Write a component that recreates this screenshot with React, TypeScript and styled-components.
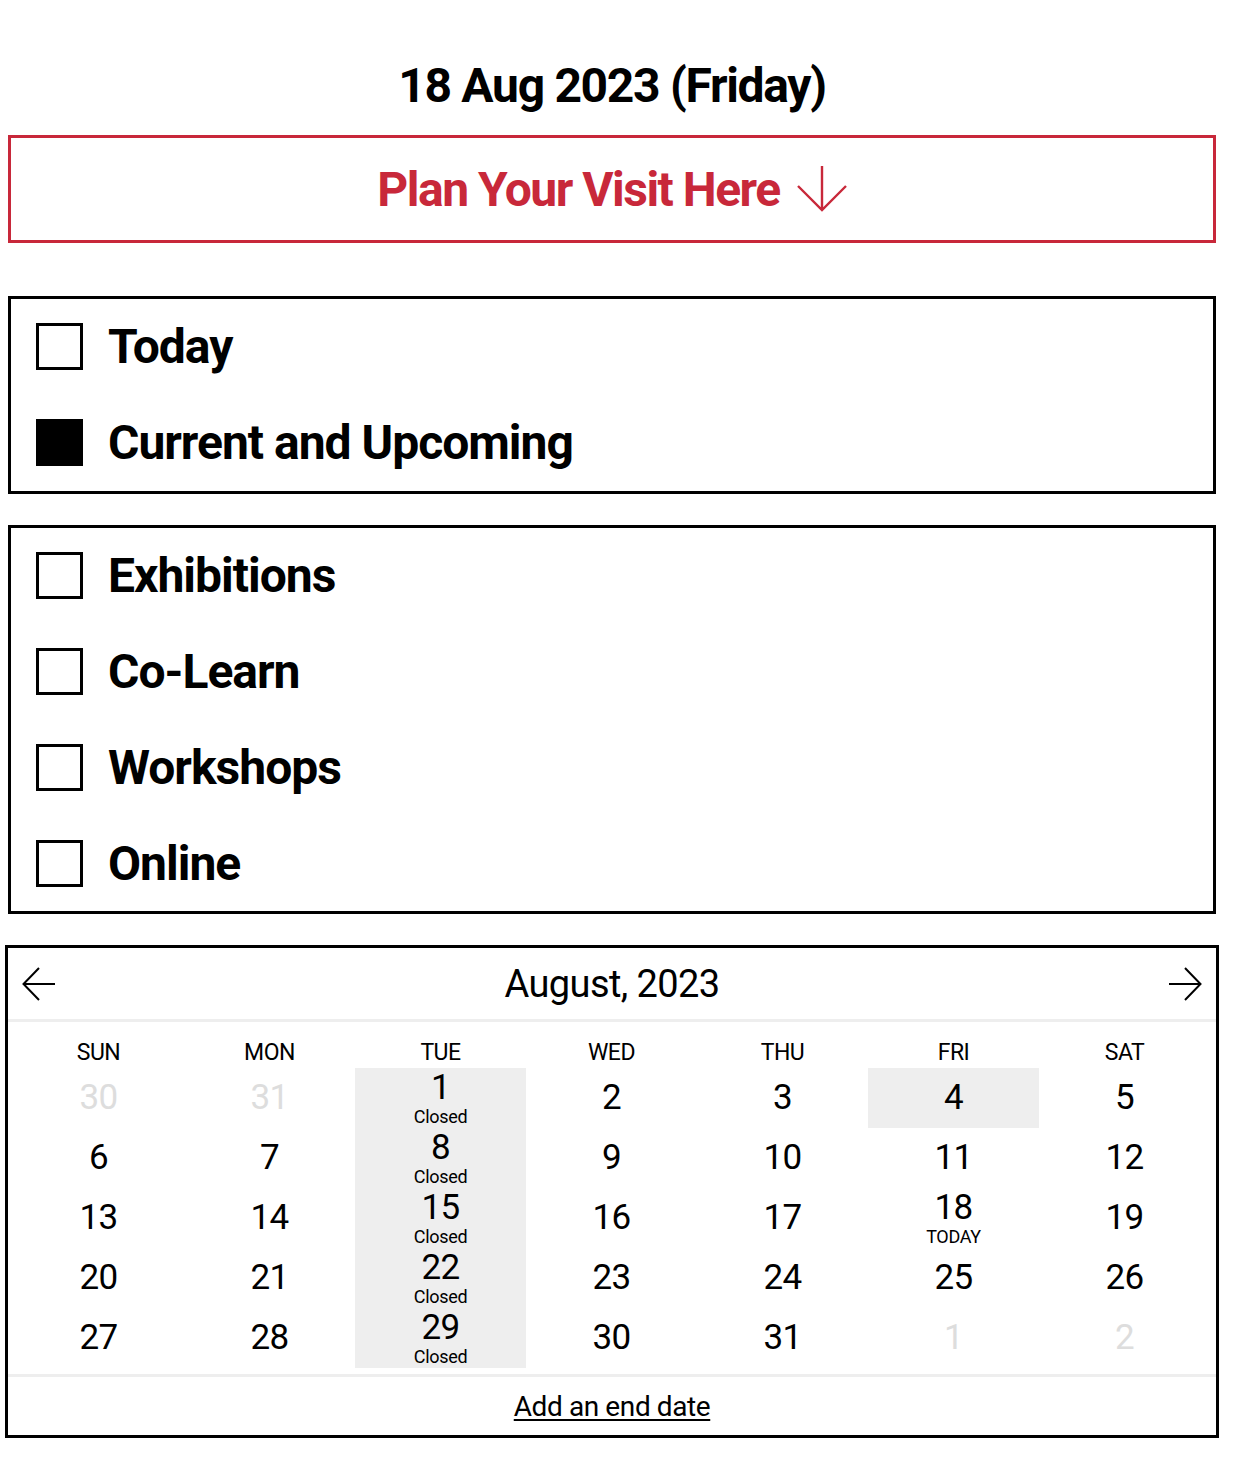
import React from 'react'
import styled, { createGlobalStyle } from 'styled-components'

const GlobalStyle = createGlobalStyle`
  body {
    margin: 0;
    background: #fff;
    font-family: Roboto, "Liberation Sans", Arial, sans-serif;
    color: #000;
  }
`

const Page = styled.div`
  width: 1208px;
  margin-left: 8px;
  padding: 58px 0 40px;
  display: flex;
  flex-direction: column;
`

const DateTitle = styled.h1`
  margin: 0 0 21px;
  text-align: center;
  font-size: 48px;
  font-weight: 700;
  letter-spacing: -1.3px;
  line-height: 56px;
`

const PlanButton = styled.button`
  height: 108px;
  border: 3px solid #c8283a;
  background: #fff;
  color: #c8283a;
  display: flex;
  align-items: center;
  justify-content: center;
  gap: 17px;
  font-family: inherit;
  font-size: 48px;
  font-weight: 700;
  letter-spacing: -1.5px;
  cursor: pointer;
`

const FilterBox = styled.div<{ $top: number; $bottom: number }>`
  margin-top: ${(p) => p.$top}px;
  border: 3px solid #000;
  padding: 24px 25px ${(p) => p.$bottom}px;
  display: flex;
  flex-direction: column;
  gap: 50px;
`

const FilterRow = styled.label`
  display: flex;
  align-items: center;
  gap: 25px;
  height: 46px;
  font-size: 48px;
  font-weight: 700;
  letter-spacing: -1px;
  cursor: pointer;
`

const Box = styled.span<{ $checked?: boolean }>`
  width: 47px;
  height: 47px;
  box-sizing: border-box;
  border: 3px solid #000;
  background: ${(p) => (p.$checked ? '#000' : '#fff')};
  flex-shrink: 0;
`

const Calendar = styled.div`
  margin: 31px -3px 0;
  border: 3px solid #000;
  display: flex;
  flex-direction: column;
`

const CalHeader = styled.div`
  height: 71px;
  display: flex;
  align-items: center;
  justify-content: space-between;
  padding: 0 14px;
  border-bottom: 3px solid #eee;
`

const MonthTitle = styled.div`
  font-size: 38px;
  letter-spacing: -0.6px;
`

const NavButton = styled.button`
  border: none;
  background: none;
  padding: 0;
  display: flex;
  cursor: pointer;
`

const Grid = styled.div`
  display: grid;
  grid-template-columns: repeat(7, 171px);
  padding: 16px 5px 6px;
`

const Weekday = styled.div`
  text-align: center;
  font-size: 23px;
  height: 30px;
  line-height: 30px;
  letter-spacing: -0.5px;
`

const Cell = styled.div<{ $shade?: boolean }>`
  height: 60px;
  display: flex;
  flex-direction: column;
  align-items: center;
  justify-content: center;
  background: ${(p) => (p.$shade ? '#eee' : 'transparent')};
`

const DayNum = styled.span<{ $muted?: boolean }>`
  font-size: 35px;
  line-height: 38px;
  letter-spacing: -0.6px;
  color: ${(p) => (p.$muted ? '#ddd' : '#000')};
`

const DayNote = styled.span`
  font-size: 18px;
  line-height: 20px;
  letter-spacing: -0.3px;
`

const Footer = styled.div`
  border-top: 3px solid #eee;
  height: 58px;
  display: flex;
  align-items: center;
  justify-content: center;
`

const EndLink = styled.a`
  font-size: 28px;
  color: #000;
  letter-spacing: -0.4px;
  text-decoration: underline;
  text-underline-offset: 3px;
  text-decoration-thickness: 2px;
  cursor: pointer;
`

const DownArrow = () => (
  <svg width="50" height="46" viewBox="0 0 50 46">
    <path d="M25 0 V44 M1 20 L25 44 L49 20" fill="none" stroke="#c8283a" strokeWidth="2.4" />
  </svg>
)

const SideArrow = ({ dir }: { dir: 'left' | 'right' }) => (
  <svg width="33" height="34" viewBox="0 0 33 34">
    <path
      d={dir === 'left' ? 'M33 17 H1.5 M17 1 L1.5 17 L17 33' : 'M0 17 H31.5 M16 1 L31.5 17 L16 33'}
      fill="none"
      stroke="#000"
      strokeWidth="2"
    />
  </svg>
)

type Day = { n: number; muted?: boolean; note?: string; shade?: boolean }

const weekdays = ['SUN', 'MON', 'TUE', 'WED', 'THU', 'FRI', 'SAT']

const buildDays = (): Day[] => {
  const days: Day[] = [{ n: 30, muted: true }, { n: 31, muted: true }]
  for (let i = 1; i <= 31; i++) {
    const d: Day = { n: i }
    // tuesdays are closed
    if ((i + 1) % 7 === 2) {
      d.note = 'Closed'
      d.shade = true
    }
    if (i === 4) d.shade = true
    if (i === 18) d.note = 'TODAY'
    days.push(d)
  }
  days.push({ n: 1, muted: true }, { n: 2, muted: true })
  return days
}

const App = () => {
  const days = buildDays()
  return (
    <Page>
      <GlobalStyle />
      <DateTitle>18 Aug 2023 (Friday)</DateTitle>
      <PlanButton>
        Plan Your Visit Here
        <DownArrow />
      </PlanButton>

      <FilterBox $top={53} $bottom={26}>
        <FilterRow>
          <Box />
          Today
        </FilterRow>
        <FilterRow>
          <Box $checked />
          Current and Upcoming
        </FilterRow>
      </FilterBox>

      <FilterBox $top={31} $bottom={25}>
        <FilterRow>
          <Box />
          Exhibitions
        </FilterRow>
        <FilterRow>
          <Box />
          Co-Learn
        </FilterRow>
        <FilterRow>
          <Box />
          Workshops
        </FilterRow>
        <FilterRow>
          <Box />
          Online
        </FilterRow>
      </FilterBox>

      <Calendar>
        <CalHeader>
          <NavButton aria-label="Previous month">
            <SideArrow dir="left" />
          </NavButton>
          <MonthTitle>August, 2023</MonthTitle>
          <NavButton aria-label="Next month">
            <SideArrow dir="right" />
          </NavButton>
        </CalHeader>
        <Grid>
          {weekdays.map((w) => (
            <Weekday key={w}>{w}</Weekday>
          ))}
          {days.map((d, i) => (
            <Cell key={i} $shade={d.shade}>
              <DayNum $muted={d.muted}>{d.n}</DayNum>
              {d.note && <DayNote>{d.note}</DayNote>}
            </Cell>
          ))}
        </Grid>
        <Footer>
          <EndLink>Add an end date</EndLink>
        </Footer>
      </Calendar>
    </Page>
  )
}

export default App
